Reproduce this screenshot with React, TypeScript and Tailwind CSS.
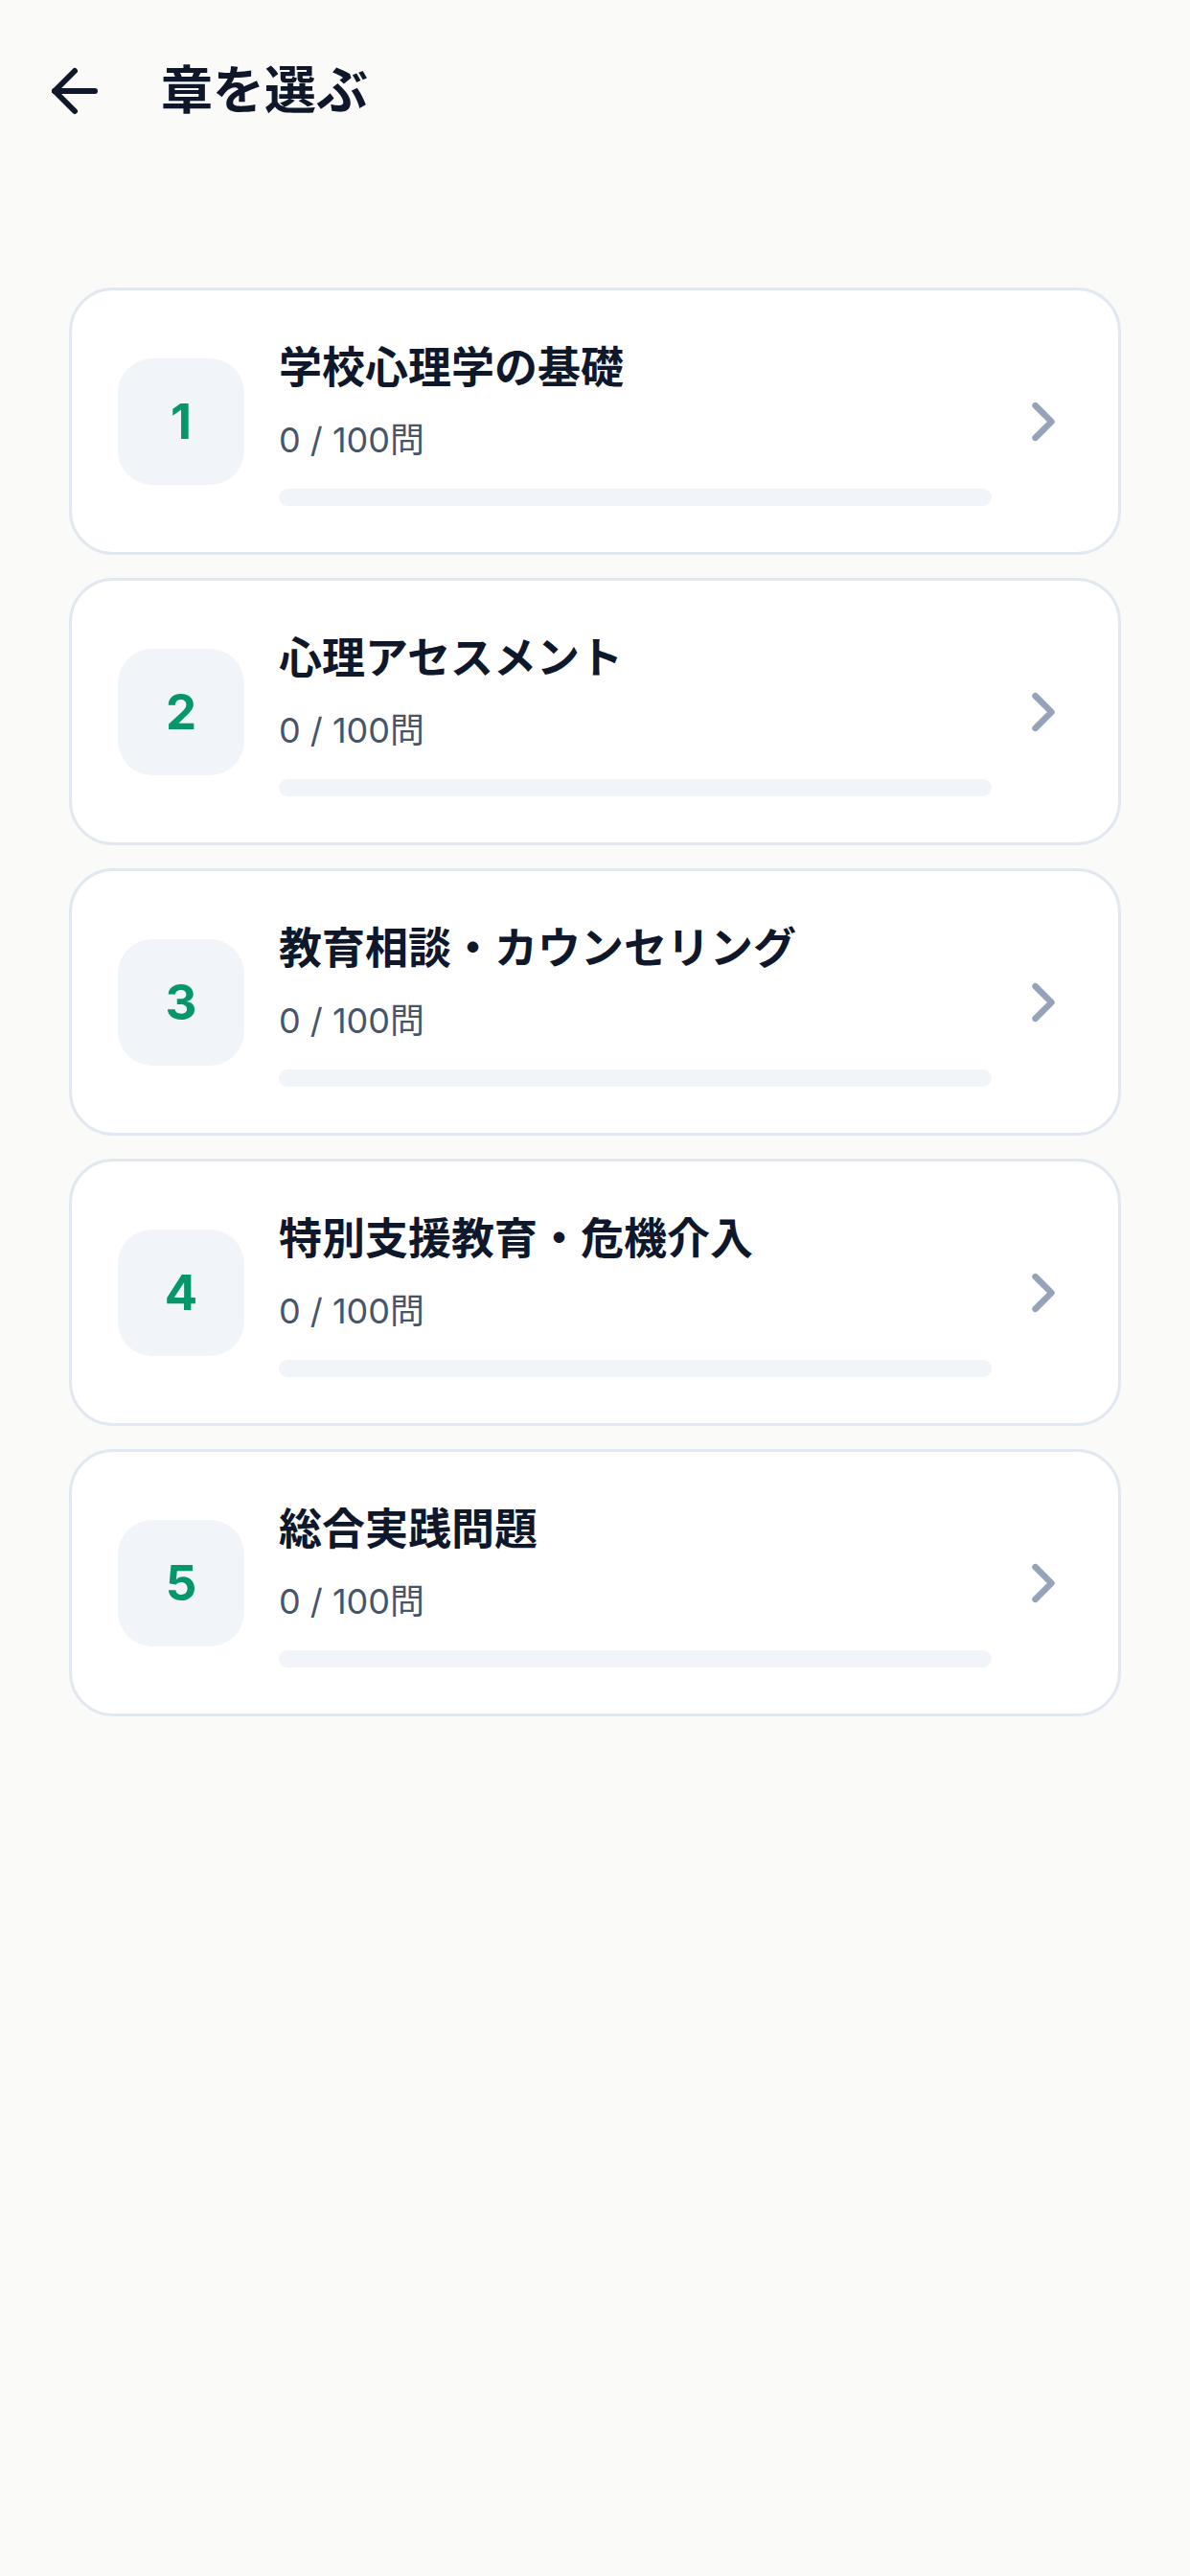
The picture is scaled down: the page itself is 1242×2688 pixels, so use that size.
import { ArrowLeft } from 'lucide-react';

const chapters = [
  { no: 1, title: '学校心理学の基礎', done: 0, total: 100 },
  { no: 2, title: '心理アセスメント', done: 0, total: 100 },
  { no: 3, title: '教育相談・カウンセリング', done: 0, total: 100 },
  { no: 4, title: '特別支援教育・危機介入', done: 0, total: 100 },
  { no: 5, title: '総合実践問題', done: 0, total: 100 },
];

function Chevron() {
  return (
    <svg width="60" height="60" viewBox="0 0 512 512" fill="none" className="shrink-0">
      <path
        d="M184 112l144 144-144 144"
        stroke="#94a3b8"
        strokeWidth="56"
        strokeLinecap="round"
        strokeLinejoin="round"
      />
    </svg>
  );
}

function ChapterCard({ no, title, done, total }: (typeof chapters)[number]) {
  const pct = total > 0 ? (done / total) * 100 : 0;
  return (
    <div className="flex items-center rounded-[46px] border-[3px] border-[#e2e8f0] bg-white p-[48px]">
      <div className="flex h-[132px] w-[132px] shrink-0 items-center justify-center rounded-[36px] bg-[#f1f5f9]">
        <span className="text-[51px] font-bold leading-none text-[#059669]">{no}</span>
      </div>
      <div className="ml-[36px] min-w-0 flex-1">
        <div className="pt-[5px] text-[45px] font-bold leading-[55px] text-[#0f172a]">{title}</div>
        <div className="mt-[21px] text-[36px] leading-[54px] text-[#475569]">
          {done} / {total}問
        </div>
        <div className="mt-[24px] h-[18px] overflow-hidden rounded-full bg-[#f1f5f9]">
          <div className="h-full rounded-full bg-[#059669]" style={{ width: `${pct}%` }} />
        </div>
      </div>
      <div className="ml-[24px]">
        <Chevron />
      </div>
    </div>
  );
}

export default function App() {
  return (
    <div
      className="min-h-screen bg-[#fafaf9] pt-[59px]"
      style={{ fontFamily: 'Inter, "Noto Sans CJK JP", sans-serif' }}
    >
      <div className="ml-[42px] flex h-[72px] items-center">
        <ArrowLeft size={72} strokeWidth={2} color="#0f172a" />
        <h1 className="ml-[54px] text-[54px] font-bold leading-none text-[#0f172a]">章を選ぶ</h1>
      </div>

      <div className="mt-[169px] flex flex-col gap-[24px] px-[72px]">
        {chapters.map((c) => (
          <ChapterCard key={c.no} {...c} />
        ))}
      </div>
    </div>
  );
}
